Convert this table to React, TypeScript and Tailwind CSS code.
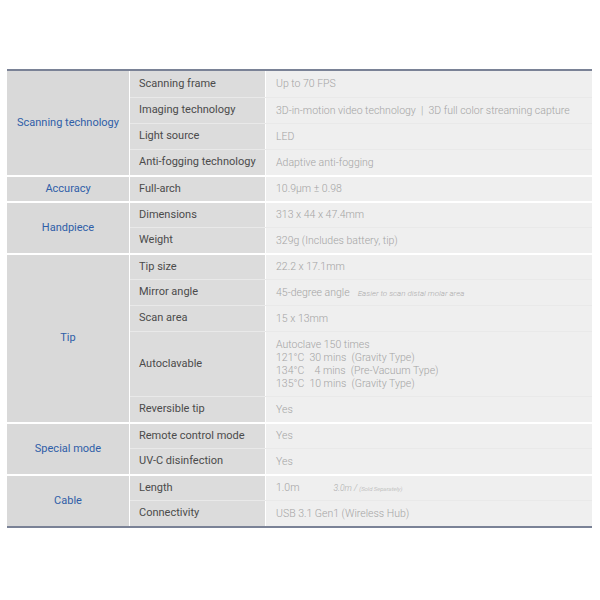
const groups = [
  {
    name: "Scanning technology",
    rows: [
      { label: "Scanning frame", value: "Up to 70 FPS" },
      { label: "Imaging technology", value: "3D-in-motion video technology  |  3D full color streaming capture" },
      { label: "Light source", value: "LED" },
      { label: "Anti-fogging technology", value: "Adaptive anti-fogging" },
    ],
  },
  { name: "Accuracy", rows: [{ label: "Full-arch", value: "10.9µm ± 0.98" }] },
  {
    name: "Handpiece",
    rows: [
      { label: "Dimensions", value: "313 x 44 x 47.4mm" },
      { label: "Weight", value: "329g (Includes battery, tip)" },
    ],
  },
  {
    name: "Tip",
    rows: [
      { label: "Tip size", value: "22.2 x 17.1mm" },
      { label: "Mirror angle", value: "45-degree angle", note: "Easier to scan distal molar area" },
      { label: "Scan area", value: "15 x 13mm" },
      {
        label: "Autoclavable",
        lines: [
          "Autoclave 150 times",
          "121°C  30 mins  (Gravity Type)",
          "134°C    4 mins  (Pre-Vacuum Type)",
          "135°C  10 mins  (Gravity Type)",
        ],
      },
      { label: "Reversible tip", value: "Yes" },
    ],
  },
  {
    name: "Special mode",
    rows: [
      { label: "Remote control mode", value: "Yes" },
      { label: "UV-C disinfection", value: "Yes" },
    ],
  },
  {
    name: "Cable",
    rows: [
      { label: "Length", value: "1.0m", cable: true },
      { label: "Connectivity", value: "USB 3.1 Gen1 (Wireless Hub)" },
    ],
  },
];

type Row = {
  label: string;
  value?: string;
  note?: string;
  lines?: string[];
  cable?: boolean;
};

// first row of a later group sits under a 2px white rule, so it is 2px shorter
function rowClass(row: Row, ri: number, gi: number) {
  if (row.lines) return "flex h-[65px] border-t border-[#e9e9e9]";
  if (ri > 0) return "flex h-[26px] border-t border-[#e9e9e9]";
  if (gi > 0) return "flex h-[24px]";
  return "flex h-[26px]";
}

function SpecRow({ row, ri, gi }: { row: Row; ri: number; gi: number }) {
  return (
    <div className={rowClass(row, ri, gi)}>
      <div className="w-[135px] shrink-0 bg-[#dcdcdc] pl-[9px] flex items-center text-[11px] text-[#4b4b4b]">
        {row.label}
      </div>
      <div className="flex-1 bg-[#efefef] border-l border-white pl-[10px] flex items-center text-[10.5px] font-light text-[#a4a4a4]">
        {row.lines ? (
          <div className="leading-[13px] whitespace-pre">
            {row.lines.map((l) => (
              <div key={l}>{l}</div>
            ))}
          </div>
        ) : (
          <span className="whitespace-pre">
            {row.value}
            {row.note && (
              <span className="ml-[8px] text-[8px] italic text-[#ababab]">{row.note}</span>
            )}
            {row.cable && (
              <span className="ml-[34px] italic text-[8.5px] text-[#ababab]">
                3.0m / <span className="text-[6px]">(Sold Separately)</span>
              </span>
            )}
          </span>
        )}
      </div>
    </div>
  );
}

export default function App() {
  return (
    <div className="w-[600px] h-[600px] bg-white pt-[69px]" style={{ fontFamily: "Roboto, 'Liberation Sans', sans-serif" }}>
      <div className="ml-[7px] w-[585px] border-t-2 border-b-2 border-[#7a8296]">
        {groups.map((g, gi) => (
          <div key={g.name} className={gi === 0 ? "flex" : "flex border-t-2 border-white"}>
            <div className="w-[122px] shrink-0 bg-[#d9d9d9] flex items-center justify-center text-[11px] text-[#2f5ea8]">
              {g.name}
            </div>
            <div className="flex-1 flex flex-col border-l border-white">
              {g.rows.map((r, ri) => (
                <SpecRow key={r.label} row={r} ri={ri} gi={gi} />
              ))}
            </div>
          </div>
        ))}
      </div>
    </div>
  );
}
